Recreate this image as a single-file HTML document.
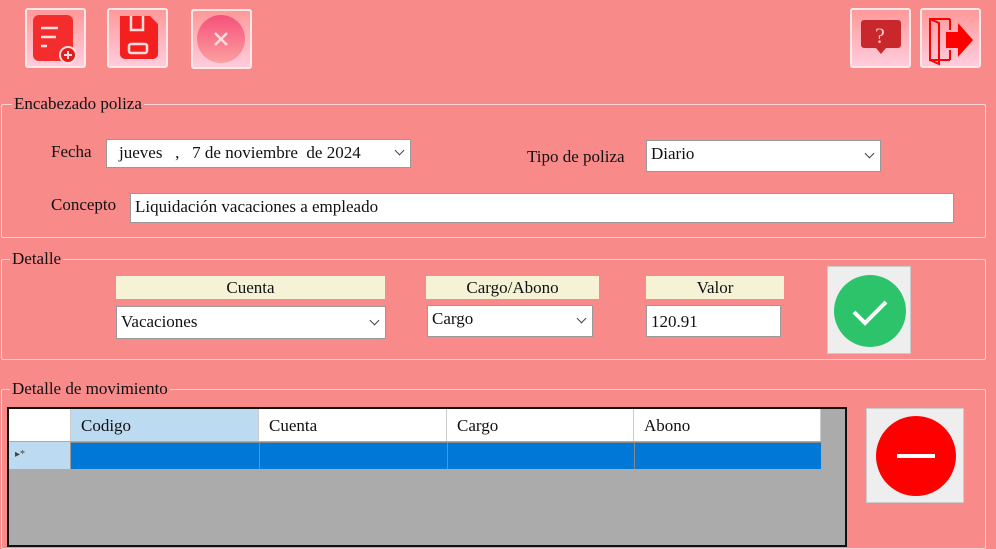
<!DOCTYPE html>
<html><head><style>
*{box-sizing:border-box;margin:0;padding:0;font-family:"Liberation Serif","DejaVu Serif",serif}
body{width:996px;height:538px;overflow:hidden;background:#F88A8A;font-size:17px;color:#111;position:relative}
.a{position:absolute}
.btn{position:absolute;width:61px;height:60px;border:2px solid #fbe9e9;background:linear-gradient(#f99,#fcd);border-radius:3px}
.grp{position:absolute;border:1px solid #f3d3d3;border-radius:2px}
.lg{position:absolute;top:-11px;left:10px;background:#F88A8A;padding:0 2px;font-size:17px}
.box{position:absolute;background:#fff;border:1px solid #999;padding:3px 4px;font-size:17px;white-space:nowrap}
.chev{position:absolute;right:7px;top:7px;width:7px;height:7px;border-right:1px solid #444;border-bottom:1px solid #444;transform:rotate(45deg)}
.hd{position:absolute;background:#F5F2D6;text-align:center;height:23px;line-height:23px}
.cell{position:absolute;top:0;height:32px;line-height:34px;padding-left:10px;background:#fff;border-right:1px solid #ccc}
</style></head><body>
<div class="btn" style="left:25px;top:8px"><svg width="57" height="56" viewBox="0 0 57 56"><rect x="6" y="5" width="40" height="46" rx="6" fill="#f32d2d"/><path d="M14 18h17M14 27h15M14 36h6" stroke="#fdd" stroke-width="2.5"/><circle cx="41" cy="45" r="8" fill="#e21d1d" stroke="#fdd" stroke-width="2"/><path d="M37 45h8M41 41v8" stroke="#fdd" stroke-width="2"/></svg></div>
<div class="btn" style="left:107px;top:8px"><svg width="57" height="56" viewBox="0 0 57 56"><path d="M11 6h30l8 8v30a5 5 0 0 1-5 5H16a5 5 0 0 1-5-5z" fill="#f42020"/><path d="M22 6v14h12V6" fill="none" stroke="#fdd" stroke-width="2.5"/><rect x="20" y="34" width="18" height="9" rx="2" fill="none" stroke="#fdd" stroke-width="2.5"/></svg></div>
<div class="btn" style="left:191px;top:9px"><svg width="57" height="56" viewBox="0 0 57 56"><defs><linearGradient id="g" x1="0" y1="0" x2="0" y2="1"><stop offset="0" stop-color="#f6507a"/><stop offset="1" stop-color="#fba0a0"/></linearGradient></defs><circle cx="28" cy="28" r="24" fill="url(#g)"/><path d="M22 22l12 12M34 22l-12 12" stroke="#fdd" stroke-width="2.5"/></svg></div>
<div class="btn" style="left:850px;top:8px"><svg width="57" height="56" viewBox="0 0 57 56"><path d="M12 10h34a3 3 0 0 1 3 3v22a3 3 0 0 1-3 3H34l-5 6-5-6H12a3 3 0 0 1-3-3V13a3 3 0 0 1 3-3z" fill="#c8282c"/><text x="28" y="33" text-anchor="middle" font-family="Liberation Sans" font-size="22" fill="#fcc">?</text></svg></div>
<div class="btn" style="left:920px;top:8px"><svg width="57" height="56" viewBox="0 0 57 56"><path d="M28 9H8v41h20M28 9v11M28 40v10" fill="none" stroke="#f00" stroke-width="2"/><path d="M8 9l9 4v41l-9-4" fill="none" stroke="#f00" stroke-width="2"/><path d="M24 22h12v-9l15 17-15 17v-9H24z" fill="#f00"/></svg></div>

<div class="grp" style="left:1px;top:104px;width:985px;height:134px"><span class="lg">Encabezado poliza</span></div>
<div class="a" style="left:51px;top:142px">Fecha</div>
<div class="box" style="left:106px;top:139px;width:305px;height:29px;padding-left:12px">jueves &nbsp; , &nbsp; 7 de noviembre &nbsp;de 2024<span class="chev"></span></div>
<div class="a" style="left:527px;top:147px">Tipo de poliza</div>
<div class="box" style="left:646px;top:140px;width:235px;height:32px">Diario<span class="chev" style="top:9px"></span></div>
<div class="a" style="left:51px;top:195px">Concepto</div>
<div class="box" style="left:130px;top:193px;width:824px;height:30px">Liquidación vacaciones a empleado</div>

<div class="grp" style="left:1px;top:259px;width:985px;height:101px"><span class="lg" style="left:8px">Detalle</span></div>
<div class="hd" style="left:116px;top:276px;width:269px">Cuenta</div>
<div class="box" style="left:116px;top:306px;width:270px;height:33px;padding-top:5px">Vacaciones<span class="chev" style="top:10px"></span></div>
<div class="hd" style="left:426px;top:276px;width:173px">Cargo/Abono</div>
<div class="box" style="left:427px;top:305px;width:166px;height:32px">Cargo<span class="chev" style="top:9px"></span></div>
<div class="hd" style="left:646px;top:276px;width:138px">Valor</div>
<div class="box" style="left:646px;top:305px;width:135px;height:32px;padding-top:6px">120.91</div>
<div class="a" style="left:827px;top:266px;width:84px;height:88px;background:#EFEEEE;border:1px solid #ccc"><svg width="84" height="88"><circle cx="42" cy="44" r="36" fill="#2dc36a"/><path d="M26 45l11 11 21-21" fill="none" stroke="#fff" stroke-width="4"/></svg></div>

<div class="grp" style="left:1px;top:389px;width:985px;height:160px"><span class="lg" style="left:8px">Detalle de movimiento</span></div>
<div class="a" style="left:7px;top:407px;width:840px;height:140px;background:#ABABAB;border:2px solid #111">
 <div class="cell" style="left:0;width:62px;padding:0"></div>
 <div class="cell" style="left:62px;width:188px;background:#BDDBF0">Codigo</div>
 <div class="cell" style="left:250px;width:188px">Cuenta</div>
 <div class="cell" style="left:438px;width:187px">Cargo</div>
 <div class="cell" style="left:625px;width:187px">Abono</div>
 <div class="a" style="left:0;top:33px;width:62px;height:27px;background:#BDDBF0;border-right:1px solid #999;font-size:10px;color:#444;padding:7px 0 0 6px">▸*</div>
 <div class="a" style="left:62px;top:33px;width:750px;height:27px;background:#0078D7;border-top:1px solid #888"></div>
 <div class="a" style="left:250px;top:33px;width:1px;height:27px;background:#888"></div>
 <div class="a" style="left:438px;top:33px;width:1px;height:27px;background:#888"></div>
 <div class="a" style="left:625px;top:33px;width:1px;height:27px;background:#888"></div>
</div>
<div class="a" style="left:866px;top:408px;width:98px;height:95px;background:#EFEEEE;border:1px solid #ccc"><svg width="98" height="95"><circle cx="49" cy="47" r="40" fill="#f00"/><path d="M30 47h38" stroke="#fff" stroke-width="4"/></svg></div>
</body></html>
